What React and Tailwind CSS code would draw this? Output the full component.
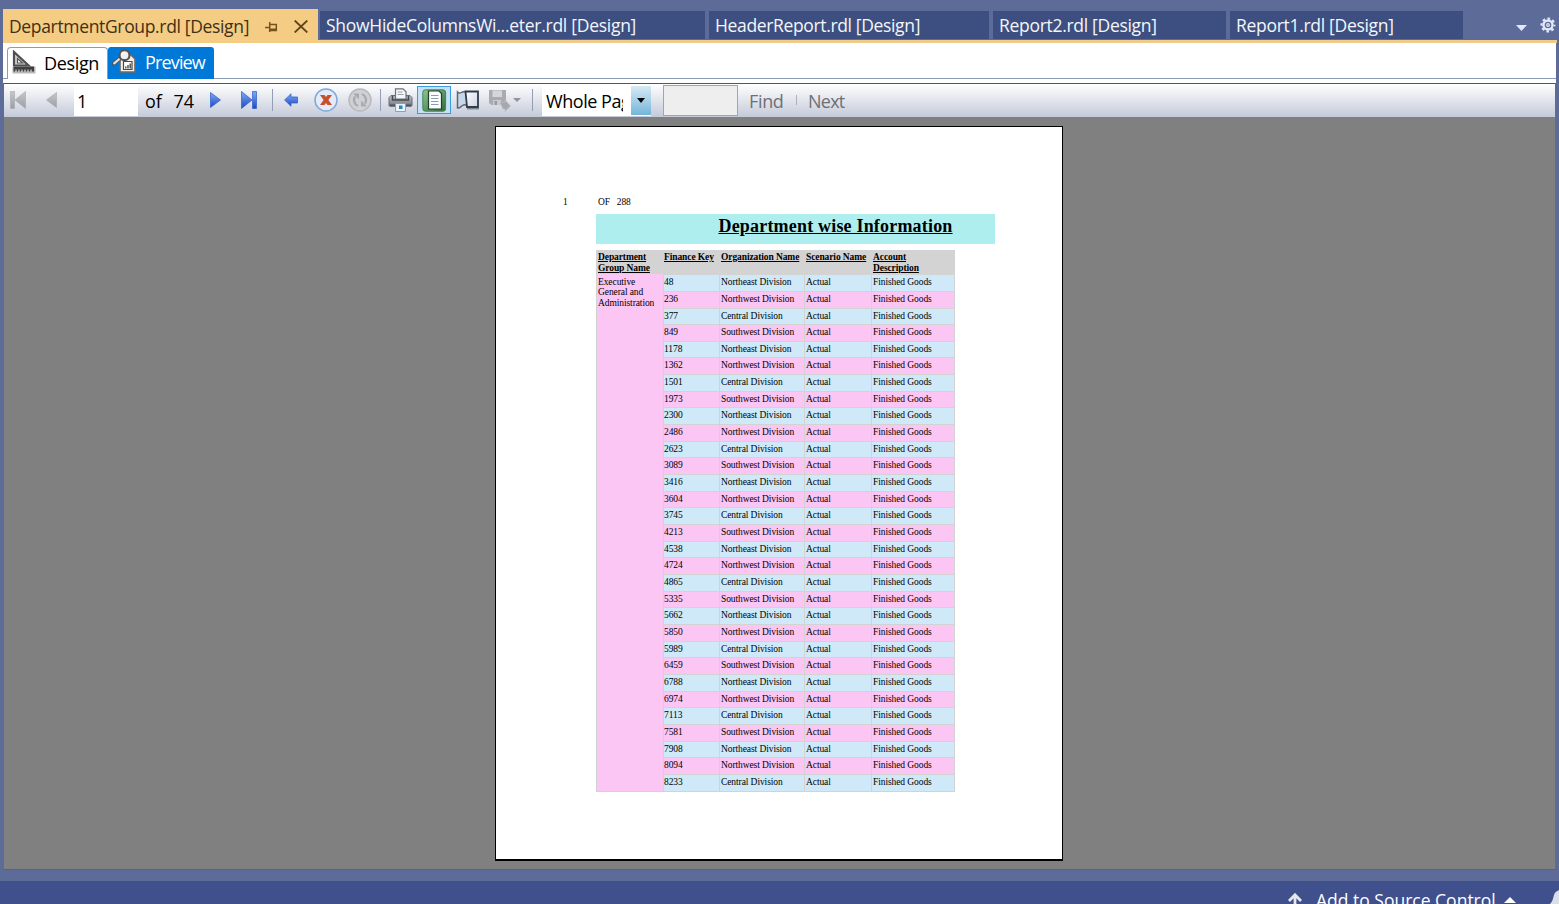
import React from 'react';

const KEYS = [48, 236, 377, 849, 1178, 1362, 1501, 1973, 2300, 2486, 2623, 3089, 3416, 3604, 3745, 4213, 4538, 4724, 4865, 5335, 5662, 5850, 5989, 6459, 6788, 6974, 7113, 7581, 7908, 8094, 8233];
const ORGS = ['Northeast Division', 'Northwest Division', 'Central Division', 'Southwest Division'];

function Tab({ label, className, text }) {
  return (
    <div className={`flex h-[28px] items-center bg-[#3c4f80] pt-[2px] pl-[6px] text-[#f4f6fb] ${className}`}>
      <span className={`whitespace-nowrap text-[17.5px] leading-none ${text}`}>{label}</span>
    </div>
  );
}

function PinIcon() {
  return (
    <svg className="h-[12px] w-[13px]" viewBox="0 0 13 12" fill="none" stroke="#76521c" strokeWidth="1.5">
      <path d="M0 6.500h4.500M4.700 1v10M4.700 3.500h6.600v6H4.700" />
      <path d="M4.700 8.500h6.600" strokeWidth="2" />
    </svg>
  );
}

function GearIcon() {
  return (
    <svg className="h-[16px] w-[16px]" viewBox="0 0 16 16" fill="none" stroke="#e3e8f8">
      <circle cx="8" cy="8" r="4.500" strokeWidth="2.400" />
      <circle cx="8" cy="8" r="6.400" strokeWidth="2.200" strokeDasharray="2.600 2.427" strokeDashoffset="1.300" />
      <circle cx="8" cy="8" r="1.300" strokeWidth="1.300" />
    </svg>
  );
}

function DesignIcon() {
  return (
    <svg className="h-[24px] w-[24px]" viewBox="0 0 24 24" fill="none">
      <path d="M2 2v13.500h14.500z" fill="#d0d0d0" stroke="#4f4f4f" strokeWidth="2.200" />
      <path d="M5.500 8.500v4.500h5z" fill="#fff" stroke="#555" strokeWidth="1.200" />
      <path d="M.5 16.500h23v7H.5z" fill="#b9b9b9" />
      <path d="M1.500 16.500h20.500v5H1.500z" fill="#3f3f3f" />
      <path d="M4 19.500v2.500M7 19.500v2.500M10 19.500v2.500M13 19.500v2.500M16 19.500v2.500M19 19.500v2.500" stroke="#d5d5d5" strokeWidth="1.200" />
    </svg>
  );
}

function PreviewIcon() {
  return (
    <svg className="h-[24px] w-[24px]" viewBox="0 0 24 24" fill="none">
      <path d="M8 6h11l4 4v13H8z" fill="#f3efe9" stroke="#6a6866" strokeWidth="1.600" />
      <path d="M11.500 12.500h8.500v8h-8.500z" fill="#fff" stroke="#4b4845" strokeWidth="1.200" />
      <path d="M13.800 19.500v-2M16 19.500v-3.500M18.200 19.500v-5" stroke="#4b4845" strokeWidth="1.400" />
      <path d="M8 9.500l-6 5" stroke="#55504c" strokeWidth="4" strokeLinecap="round" />
      <path d="M7.500 9.900l-5.300 4.400" stroke="#e2deda" strokeWidth="2.200" strokeLinecap="round" />
      <circle cx="12.500" cy="6.200" r="5" fill="#eef1f4" stroke="#57534f" strokeWidth="2.200" />
      <path d="M10 6a2.700 2.700 0 0 1 2.500-2.300" stroke="#fff" strokeWidth="1.500" />
    </svg>
  );
}

function Gradients() {
  return (
    <svg className="absolute h-0 w-0" aria-hidden="true">
      <defs>
        <linearGradient id="blue" x1="0" y1="0" x2="0" y2="1">
          <stop offset="0" stopColor="#7fabf3" />
          <stop offset="1" stopColor="#1e49c4" />
        </linearGradient>
        <linearGradient id="grey" x1="0" y1="0" x2="0" y2="1">
          <stop offset="0" stopColor="#c6c7c9" />
          <stop offset="1" stopColor="#9c9ea3" />
        </linearGradient>
        <linearGradient id="green" x1="0" y1="0" x2="1" y2="1">
          <stop offset="0" stopColor="#8fc492" />
          <stop offset="1" stopColor="#2c6f39" />
        </linearGradient>
        <linearGradient id="steel" x1="0" y1="0" x2="0" y2="1">
          <stop offset="0" stopColor="#c5c9ce" />
          <stop offset="1" stopColor="#70757c" />
        </linearGradient>
        <linearGradient id="paper" x1="0" y1="0" x2="1" y2="1">
          <stop offset="0" stopColor="#ffffff" />
          <stop offset="1" stopColor="#c9d3e6" />
        </linearGradient>
      </defs>
    </svg>
  );
}

function FirstIcon() {
  return (
    <svg className="h-[18px] w-[16px]" viewBox="0 0 16 18" fill="url(#grey)" stroke="#a6a8ac" strokeWidth=".6">
      <path d="M.5 .5h4v17h-4zM15.500 .5v17L5 9z" />
    </svg>
  );
}

function PrevIcon() {
  return (
    <svg className="h-[16px] w-[11px]" viewBox="0 0 11 16" fill="url(#grey)" stroke="#a6a8ac" strokeWidth=".6">
      <path d="M10.500 .5v15L.5 8z" />
    </svg>
  );
}

function NextIcon() {
  return (
    <svg className="h-[16px] w-[11px]" viewBox="0 0 11 16" fill="url(#blue)" stroke="#3a66cf" strokeWidth=".8">
      <path d="M.5 .5v15l10-7.500z" />
    </svg>
  );
}

function LastIcon() {
  return (
    <svg className="h-[18px] w-[16px]" viewBox="0 0 16 18" fill="url(#blue)" stroke="#3a66cf" strokeWidth=".8">
      <path d="M.5 .5v17L11 9zM11.500 .5h4v17h-4z" />
    </svg>
  );
}

function BackIcon() {
  return (
    <svg className="h-[14px] w-[14px]" viewBox="0 0 14 14" fill="url(#blue)" stroke="#3563cb" strokeWidth=".8">
      <path d="M7 .8v3.200h6.500v6H7v3.200L.6 7z" />
    </svg>
  );
}

function StopIcon() {
  return (
    <svg className="h-[24px] w-[24px]" viewBox="0 0 24 24" fill="none">
      <circle cx="12" cy="12" r="11" fill="#e4ebf6" stroke="#7fa9dc" strokeWidth="1.500" />
      <path d="M6 7h4.500l1.500 2L13.500 7H18l-3.600 5 3.600 5h-4.500L12 15l-1.500 2H6l3.600-5z" fill="#c9502f" />
    </svg>
  );
}

function RefreshIcon() {
  return (
    <svg className="h-[24px] w-[24px]" viewBox="0 0 24 24" fill="none">
      <circle cx="12" cy="12" r="11" fill="#cfd1d6" stroke="#b7b9be" strokeWidth="1.500" />
      <path d="M10 18A6.500 6.500 0 0 1 7 8.500M14 6A6.500 6.500 0 0 1 17 15.500" stroke="#a9abb0" strokeWidth="2.400" />
      <path d="M5 5.500h6v6zM19 18.500h-6v-6z" fill="#a9abb0" />
    </svg>
  );
}

function PrinterIcon() {
  return (
    <svg className="h-[24px] w-[25px]" viewBox="0 0 25 24" fill="none">
      <path d="M1 9.500l2-2h19l2 2v8.500H1z" fill="url(#steel)" stroke="#666c75" />
      <path d="M7.500 .8h7.500l3 3v7.200H7.500z" fill="#f5f6f8" stroke="#6b717a" strokeWidth="1.200" />
      <path d="M9.500 4h5M9.500 6.500h6" stroke="#9aa0a8" />
      <path d="M4.500 8v4h16V8" stroke="#454a52" strokeWidth="1.600" />
      <path d="M2 17.500h21" stroke="#4d535b" strokeWidth="2" />
      <path d="M7.500 15.500h10v8h-10z" fill="#e9f3fb" stroke="#8fa1ad" />
      <path d="M11 17.500h3.500V21H11z" fill="#2f86b8" />
    </svg>
  );
}

function LayoutIcon() {
  return (
    <svg className="h-[23px] w-[25px]" viewBox="0 0 25 23" fill="none">
      <rect x=".8" y=".8" width="22.800" height="21.400" rx="2.500" fill="url(#green)" stroke="#4a8355" />
      <path d="M6.500 2h10.500l2.500 2.500v15.500H6.500z" fill="#fbfcfd" stroke="#1f3f29" strokeWidth="1.200" />
      <path d="M9 6.500h7.500M9 9.500h7.500M9 12.500h7.500M9 15.500h7.500" stroke="#8b99ba" strokeWidth="1.200" />
    </svg>
  );
}

function SetupIcon() {
  return (
    <svg className="h-[21px] w-[24px]" viewBox="0 0 24 21" fill="none">
      <path d="M1.500 2c1.500 1.500 2.500 1.500 4 .5s3-1 5.500 0v13c-2-1-3-1-4.500 0s-3.500 3-5 2.500z" fill="#c7d8ea" stroke="#5d6673" strokeWidth="1.500" />
      <path d="M9.500 1.500H22v15.500H11z" fill="url(#paper)" stroke="#323b48" strokeWidth="1.800" />
      <path d="M11 18.700h12" stroke="#7d8591" strokeWidth="1.500" />
    </svg>
  );
}

function ExportIcon() {
  return (
    <svg className="h-[23px] w-[23px]" viewBox="0 0 23 23" fill="none">
      <path d="M1 1h17v15H3.500L1 14z" fill="#a9abb0" />
      <path d="M4.500 1.500h9.500v6.500H4.500z" fill="#d4d6db" />
      <path d="M5 11h8v5H5z" fill="#c9cbd0" />
      <path d="M6.500 12h2.500v4H6.500z" fill="#999ba1" />
      <path d="M12 13.500h5v-2.500l5.500 6-5.500 5.500V20h-2z" fill="#a6a8ae" stroke="#bfc1c6" strokeWidth=".6" />
    </svg>
  );
}

function Separator({ className }) {
  return <span className={`h-[22px] w-px shrink-0 bg-[#969db2] ${className}`} />;
}

function Toolbar() {
  return (
    <div className="mr-[2px] ml-px flex h-[34px] items-center border-t border-[#55565c] bg-linear-to-b from-white to-[#c4cad9] pb-px text-[18px] leading-none">
      <div className="flex w-[54px] items-center gap-[20px] pl-[6px]"><FirstIcon /><PrevIcon /></div>
      <div className="ml-[16px] flex h-[32px] w-[64px] items-center bg-white pt-[2px] pl-[3px]">1</div>
      <span className="ml-[7px] w-[49px] whitespace-nowrap pt-px [word-spacing:7px]">of 74</span>
      <div className="ml-[16px] flex items-center gap-[20px]"><NextIcon /><LastIcon /></div>
      <Separator className="ml-[15px]" />
      <div className="ml-[11px] flex items-center"><BackIcon /></div>
      <div className="ml-[16px] flex items-center gap-[10px]"><StopIcon /><RefreshIcon /></div>
      <Separator className="ml-[8px]" />
      <div className="ml-[7px]"><PrinterIcon /></div>
      <div className="ml-[4px] flex h-[28px] w-[34px] items-center justify-center border border-[#3c9be0] bg-[#c5e1f6]"><LayoutIcon /></div>
      <div className="ml-[5px]"><SetupIcon /></div>
      <div className="ml-[8px]"><ExportIcon /></div>
      <svg className="ml-[2px] h-[4px] w-[8px]" viewBox="0 0 8 4" fill="#8f9299"><path d="M0 0h8L4 4z" /></svg>
      <Separator className="ml-[11px]" />
      <div className="ml-[9px] flex h-[31px] w-[109px] items-center bg-white pl-[4px]">
        <span className="w-[77px] overflow-hidden pt-[6px] pb-[4px] whitespace-nowrap tracking-[-0.450px]">Whole Page</span>
        <span className="ml-auto flex h-[29px] w-[20px] items-center justify-center bg-linear-to-b from-[#d6eaf5] to-[#74b5d9]">
          <svg className="h-[5px] w-[8px]" viewBox="0 0 8 5" fill="#000"><path d="M0 0h8L4 5z" /></svg>
        </span>
      </div>
      <div className="ml-[12px] h-[31px] w-[75px] border border-[#a4a5a9] bg-[#eeeeef]" />
      <span className="ml-[11px] w-[34px] whitespace-nowrap pt-px tracking-[-0.350px] text-[#6f7075]">Find</span>
      <span className="ml-[13px] h-[10px] w-px bg-[#aeb2be]" />
      <span className="ml-[11px] whitespace-nowrap pt-px tracking-[-0.750px] text-[#6f7075]">Next</span>
    </div>
  );
}

function Heading({ children, className = '' }) {
  return <div className={`pl-[2px] leading-[11px] font-bold whitespace-nowrap underline ${className}`}>{children}</div>;
}

function ReportPage() {
  return (
    <div className="mt-[9px] ml-[491px] h-[735px] w-[568px] border border-b-2 border-black bg-white font-['Liberation_Serif',serif] text-[9.500px] text-black">
      <div className="flex h-[87px] items-end pb-px pl-[67px] leading-[22px] whitespace-pre">
        <span className="w-[35px]">1</span>
        <span className="tracking-[-0.100px]">OF   288</span>
      </div>
      <div className="ml-[100px] flex h-[30px] w-[399px] justify-center bg-[#afeeee] pl-[80px] text-[18px] leading-[25px] font-bold">
        <span className="tracking-[0.190px] whitespace-nowrap underline">Department wise Information</span>
      </div>
      <div className="mt-[6px] ml-[100px] w-[359px] border-r border-b border-[#d3d3d3]">
        <div className="grid h-[24.200px] grid-cols-[67px_57px_85px_67px_83px] bg-[#d3d3d3] pt-[2px] tracking-[-0.100px]">
          <Heading>Department<br />Group Name</Heading>
          <Heading className="pl-px">Finance Key</Heading>
          <Heading className="pl-px">Organization Name</Heading>
          <Heading className="pl-px">Scenario Name</Heading>
          <Heading className="pl-px">Account<br />Description</Heading>
        </div>
        <div className="flex tracking-[-0.090px]">
          <div className="w-[67px] border-l border-[#d3d3d3] bg-[#fbc6f4] pt-[2.500px] pl-px leading-[10.500px]">
            Executive<br />General and<br />Administration
          </div>
          <div className="flex-1">
            {KEYS.map((key, i) => (
              <div
                key={key}
                className={`grid h-[16.660px] grid-cols-[56px_85px_67px_1fr] leading-[14.700px] whitespace-nowrap ${i % 2 ? 'bg-[#fbc6f4]' : 'bg-[#cfe9f8]'}`}
              >
                <span className="border-t border-l border-[#d3d3d3]">{key}</span>
                <span className="border-t border-l border-[#d3d3d3] pl-px">{ORGS[i % 4]}</span>
                <span className="border-t border-l border-[#d3d3d3] pl-px">Actual</span>
                <span className="border-t border-l border-[#d3d3d3] pl-px">Finished Goods</span>
              </div>
            ))}
          </div>
        </div>
      </div>
    </div>
  );
}

export default function App() {
  return (
    <div className="flex h-[904px] w-[1559px] flex-col overflow-hidden bg-[#5d6b99] font-['Open_Sans','Noto_Sans',sans-serif] text-black">
      <Gradients />
      <div className="flex h-[43px] pl-[3px]">
        <div className="mt-[9px] flex h-[34px] w-[315px] items-center bg-[#f5cc84] pt-px pl-[6px] text-[#3d3017]">
          <span className="w-[240px] text-[17.500px] leading-none tracking-[-0.340px] whitespace-nowrap">DepartmentGroup.rdl [Design]</span>
          <span className="ml-[16px]"><PinIcon /></span>
          <svg className="ml-[16px] h-[13px] w-[14px]" viewBox="0 0 14 13" stroke="#5f441a" strokeWidth="1.800"><path d="M.7 .5l12.600 12M13.300 .5L.7 12.500" /></svg>
        </div>
        <div className="flex flex-1 flex-col justify-end">
          <div className="flex h-[29px] items-start">
            <Tab className="ml-[2px] w-[385px]" label="ShowHideColumnsWi...eter.rdl [Design]" text="tracking-[-0.270px]" />
            <Tab className="ml-[4px] w-[280px]" label="HeaderReport.rdl [Design]" text="tracking-[-0.350px]" />
            <Tab className="ml-[4px] w-[233px]" label="Report2.rdl [Design]" text="tracking-[-0.300px]" />
            <Tab className="ml-[4px] w-[233px]" label="Report1.rdl [Design]" text="tracking-[-0.300px]" />
            <svg className="mt-[14px] ml-[53px] h-[6px] w-[11px]" viewBox="0 0 11 6" fill="#e3e8f8"><path d="M0 0h11L5.500 6z" /></svg>
            <span className="mt-[6px] ml-[13px]"><GearIcon /></span>
          </div>
          <div className="mr-[2px] h-[3px] bg-[#f0cb8c]" />
        </div>
      </div>
      <div className="mr-[3px] ml-[3px] flex h-[40px] flex-col bg-white">
        <div className="flex h-[36px] items-end border-b border-[#8d9cb6] pl-[4px]">
          <div className="-mb-px flex h-[32px] w-[101px] items-center rounded-t-[4px] border border-b-0 border-[#8d9cb6] bg-white pb-[4px] pl-[4px]">
            <DesignIcon />
            <span className="ml-[8px] pt-[2px] text-[18px] leading-none tracking-[-0.350px]">Design</span>
          </div>
          <div className="-mb-px flex h-[32px] w-[106px] items-center rounded-t-[3px] bg-[#0078d7] pb-[4px] pl-[4px] text-white">
            <PreviewIcon />
            <span className="ml-[9px] pt-[2px] text-[18px] leading-none tracking-[-0.850px]">Preview</span>
          </div>
        </div>
      </div>
      <div className="mr-[2px] ml-[3px] flex h-[787px] flex-col border-b border-[#52648c]">
        <Toolbar />
        <div className="mr-[2px] ml-px flex flex-1 bg-[#808080]">
          <ReportPage />
        </div>
      </div>
      <div className="mt-[11px] flex h-[23px] shrink-0 items-start overflow-hidden bg-[#40508d] text-white">
        <svg className="mt-[12px] ml-[1288px] h-[16px] w-[14px] shrink-0" viewBox="0 0 14 16" fill="none" stroke="#e6e8ee" strokeWidth="2.800"><path d="M7 16V2M1 8l6-6.200L13 8" /></svg>
        <span className="mt-[9px] ml-[14px] w-[179px] shrink-0 text-[17.500px] leading-[20px] whitespace-nowrap">Add to Source Control</span>
        <svg className="mt-[16px] ml-[9px] h-[6px] w-[12px] shrink-0" viewBox="0 0 12 6" fill="#fff"><path d="M0 6h12L6 0z" /></svg>
        <svg className="mt-[8px] ml-[34px] h-[15px] w-[11px] shrink-0" viewBox="0 0 11 15" fill="#dcdfe8"><path d="M0 15c3-3 3-6 4-9s3-5 7-5v14z" /></svg>
      </div>
    </div>
  );
}
